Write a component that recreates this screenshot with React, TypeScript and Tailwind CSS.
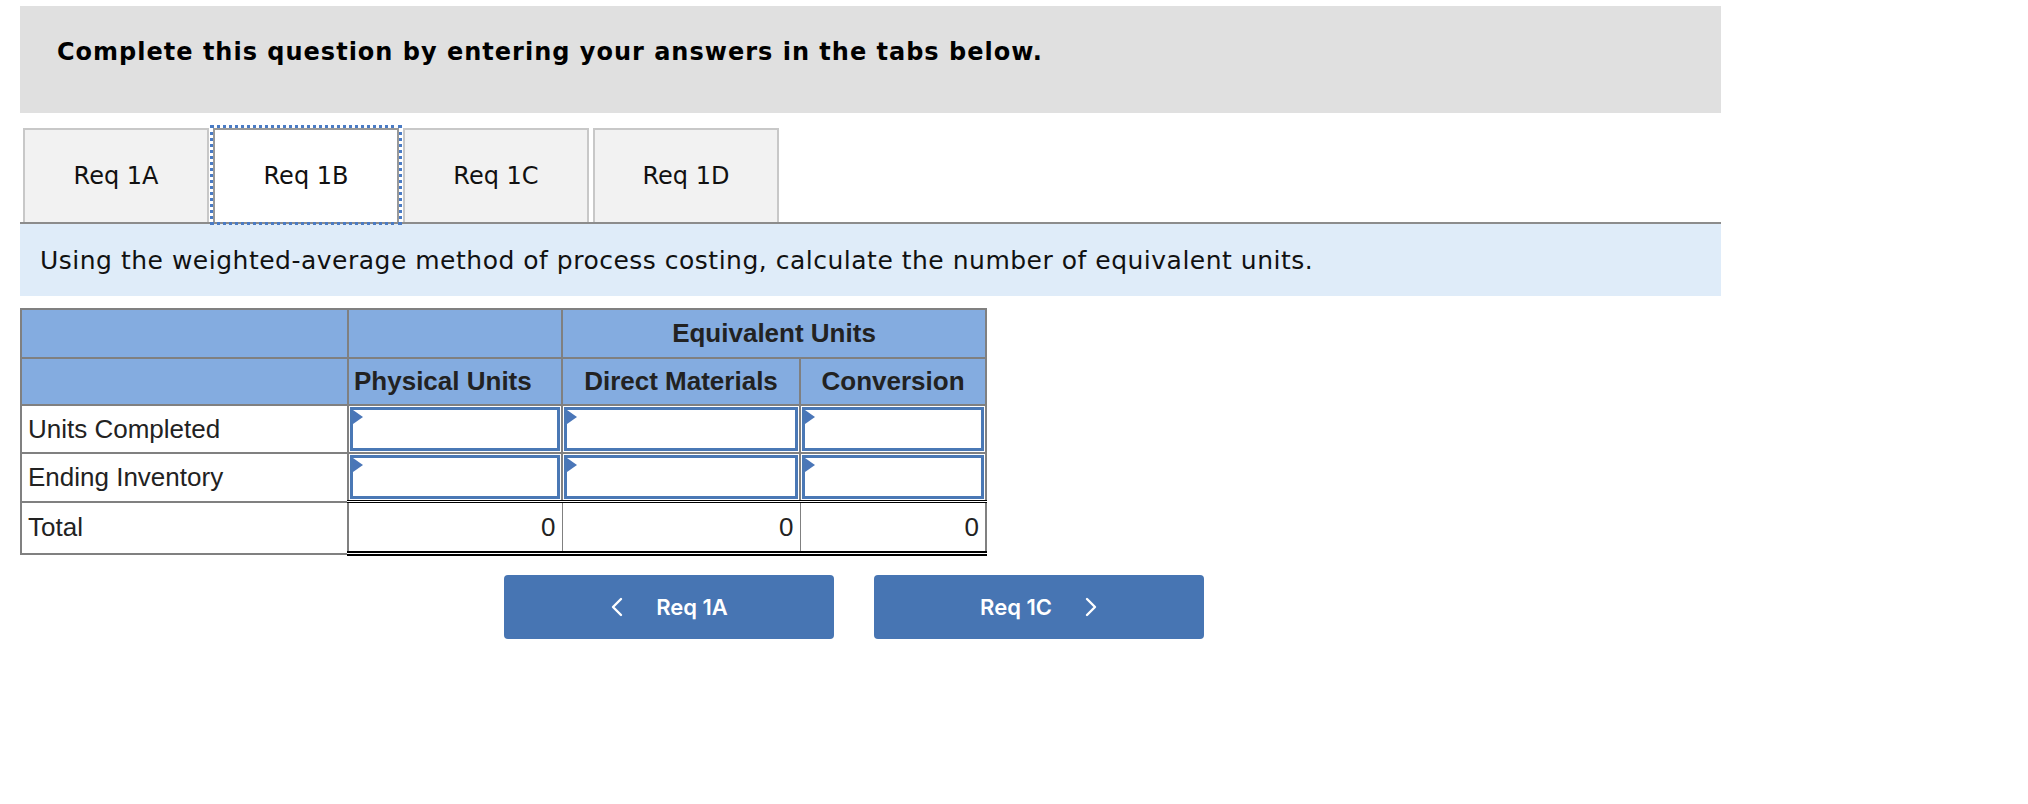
const tabs = ['Req 1A', 'Req 1B', 'Req 1C', 'Req 1D']

function InputCell() {
  return (
    <td className="p-[1px] border-2 border-[#808080] h-[48px]">
      <div className="relative h-[44px] border-[3px] border-[#4a78b5] bg-white">
        <span className="absolute left-0 top-0 w-0 h-0 border-y-[7px] border-y-transparent border-l-[10px] border-l-[#4a76b8]" />
      </div>
    </td>
  )
}

function ChevronLeft() {
  return (
    <svg width="14" height="20" viewBox="0 0 14 20" fill="none">
      <polyline points="11,2 3,10 11,18" stroke="white" strokeWidth="2.4" strokeLinecap="round" strokeLinejoin="round" />
    </svg>
  )
}

function ChevronRight() {
  return (
    <svg width="14" height="20" viewBox="0 0 14 20" fill="none">
      <polyline points="3,2 11,10 3,18" stroke="white" strokeWidth="2.4" strokeLinecap="round" strokeLinejoin="round" />
    </svg>
  )
}

export default function App() {
  return (
    <div className="w-[2028px] h-[804px] bg-white text-[#111] font-['DejaVu_Sans',sans-serif]">
      <div className="pl-[20px] pt-[6px] w-[1721px]">
        <div className="bg-[#e0e0e0] h-[107px] pl-[37px] pt-[31px]">
          <h1 className="text-[24px] leading-[30px] font-bold text-black tracking-[1px]">
            Complete this question by entering your answers in the tabs below.
          </h1>
        </div>

        <div className="mt-[15px] flex gap-[4px] pl-[3px] border-b-2 border-[#8c8c8c]">
          {tabs.map((tab, i) => (
            <div
              key={tab}
              className={
                i === 1
                  ? 'w-[186px] h-[94px] flex items-center justify-center bg-white border-2 border-b-0 border-[#999999] outline-[3px] outline-dotted outline-[#4a7bc4] outline-offset-0 text-[24px]'
                  : 'w-[186px] h-[94px] flex items-center justify-center bg-[#f2f2f2] border-2 border-b-0 border-[#c8c8c8] text-[24px]'
              }
            >
              {tab}
            </div>
          ))}
        </div>

        <div className="h-[72px] bg-[#dfecf9] pl-[20px] pt-[2px] flex items-center text-[25px] tracking-[0.5px] text-[#111]">
          Using the weighted-average method of process costing, calculate the number of equivalent units.
        </div>

        <table className="mt-[12px] border-collapse font-['Liberation_Sans',Arial,sans-serif] text-[26px] text-[#222]">
          <colgroup>
            <col className="w-[327px]" />
            <col className="w-[214px]" />
            <col className="w-[238px]" />
            <col className="w-[186px]" />
          </colgroup>
          <thead>
            <tr className="bg-[#84ace0] h-[49px]">
              <th className="border-2 border-[#808080]" />
              <th className="border-2 border-[#808080]" />
              <th colSpan={2} className="border-2 border-[#808080] font-bold text-center">
                Equivalent Units
              </th>
            </tr>
            <tr className="bg-[#84ace0] h-[47px]">
              <th className="border-2 border-[#808080]" />
              <th className="border-2 border-[#808080] font-bold text-left pl-[5px]">Physical Units</th>
              <th className="border-2 border-[#808080] font-bold text-center">Direct Materials</th>
              <th className="border-2 border-[#808080] font-bold text-center">Conversion</th>
            </tr>
          </thead>
          <tbody>
            <tr>
              <td className="border-2 border-[#808080] pl-[6px] h-[48px]">Units Completed</td>
              <InputCell />
              <InputCell />
              <InputCell />
            </tr>
            <tr>
              <td className="border-2 border-[#808080] pl-[6px] h-[48px]">Ending Inventory</td>
              <InputCell />
              <InputCell />
              <InputCell />
            </tr>
            <tr className="h-[52px]">
              <td className="border-2 border-[#808080] pl-[6px]">Total</td>
              <td className="border-t-[3px] border-t-black border-b-[5px] border-b-black border-double border-l-2 border-l-[#808080] border-r border-r-[#808080] text-right pr-[6px]">
                0
              </td>
              <td className="border-t-[3px] border-t-black border-b-[5px] border-b-black border-double border-x border-x-[#808080] text-right pr-[6px]">
                0
              </td>
              <td className="border-t-[3px] border-t-black border-b-[5px] border-b-black border-double border-l border-l-[#808080] border-r-2 border-r-[#808080] text-right pr-[6px]">
                0
              </td>
            </tr>
          </tbody>
        </table>

        <div className="mt-[19px] pl-[484px] flex gap-[40px] font-['Inter',sans-serif] text-white">
          <button className="w-[330px] h-[64px] rounded-[4px] bg-[#4775b3] flex items-center justify-center gap-[32px] text-[22px] font-semibold">
            <ChevronLeft />
            <span>Req 1A</span>
          </button>
          <button className="w-[330px] h-[64px] rounded-[4px] bg-[#4775b3] flex items-center justify-center gap-[32px] text-[22px] font-semibold">
            <span>Req 1C</span>
            <ChevronRight />
          </button>
        </div>
      </div>
    </div>
  )
}
